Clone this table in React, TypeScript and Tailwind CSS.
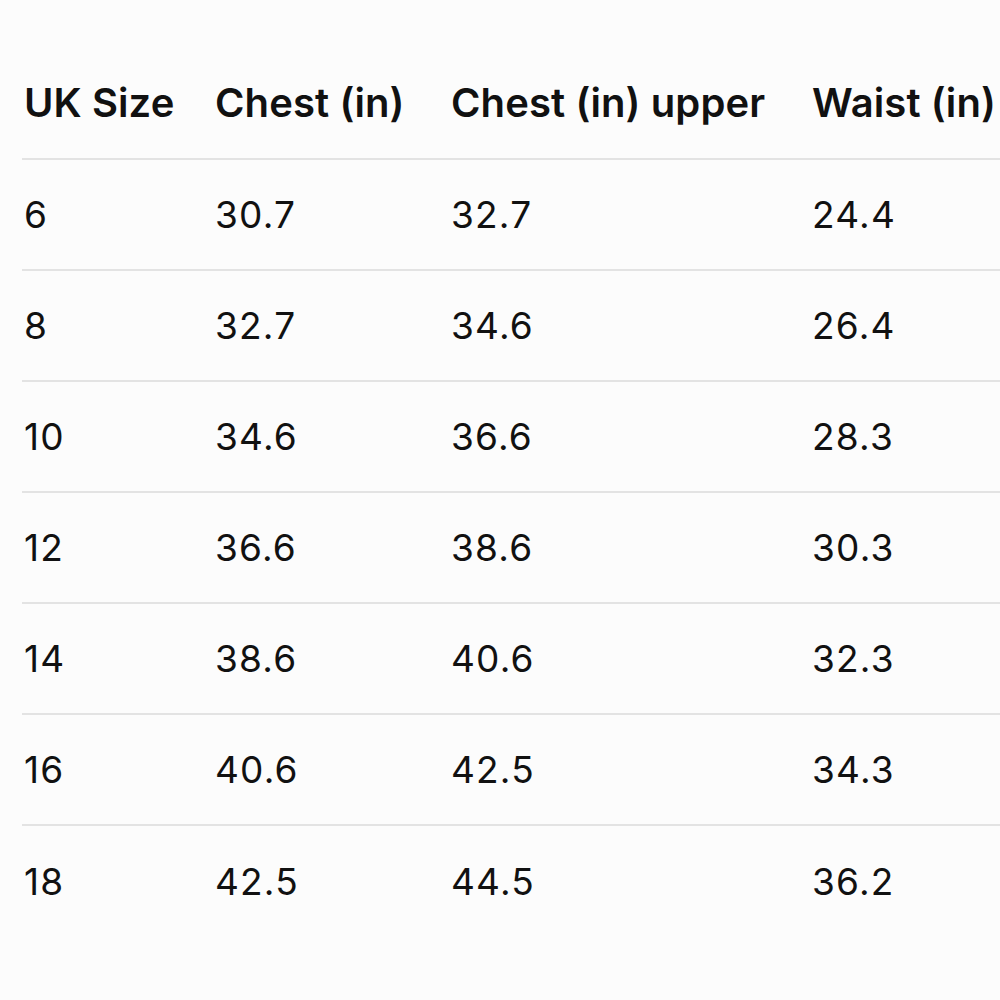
import React from "react";

const headers = ["UK Size", "Chest (in)", "Chest (in) upper", "Waist (in)"];
const rows = [
  ["6", "30.7", "32.7", "24.4"],
  ["8", "32.7", "34.6", "26.4"],
  ["10", "34.6", "36.6", "28.3"],
  ["12", "36.6", "38.6", "30.3"],
  ["14", "38.6", "40.6", "32.3"],
  ["16", "40.6", "42.5", "34.3"],
  ["18", "42.5", "44.5", "36.2"],
];

export default function App() {
  return (
    <div
      className="w-[1000px] h-[1000px] overflow-hidden bg-[#fcfcfc] text-[#111] pl-[22px] pt-[48px]"
      style={{ fontFamily: "Inter, 'Noto Sans', sans-serif" }}
    >
      <div className="grid grid-cols-[191px_236px_361px_1fr] h-[112px] items-center pl-[2px] border-b-2 border-[#e3e3e3] text-[40px] font-semibold whitespace-nowrap tracking-[0.1px]">
        {headers.map((h) => (
          <div key={h}>{h}</div>
        ))}
      </div>
      {rows.map((r, i) => (
        <div
          key={i}
          className={`grid grid-cols-[191px_236px_361px_1fr] h-[111px] items-center pl-[2px] text-[37px] font-normal whitespace-nowrap tracking-[1.2px] ${
            i < rows.length - 1 ? "border-b-2 border-[#e3e3e3]" : ""
          }`}
        >
          {r.map((c, j) => (
            <div key={j}>{c}</div>
          ))}
        </div>
      ))}
    </div>
  );
}
